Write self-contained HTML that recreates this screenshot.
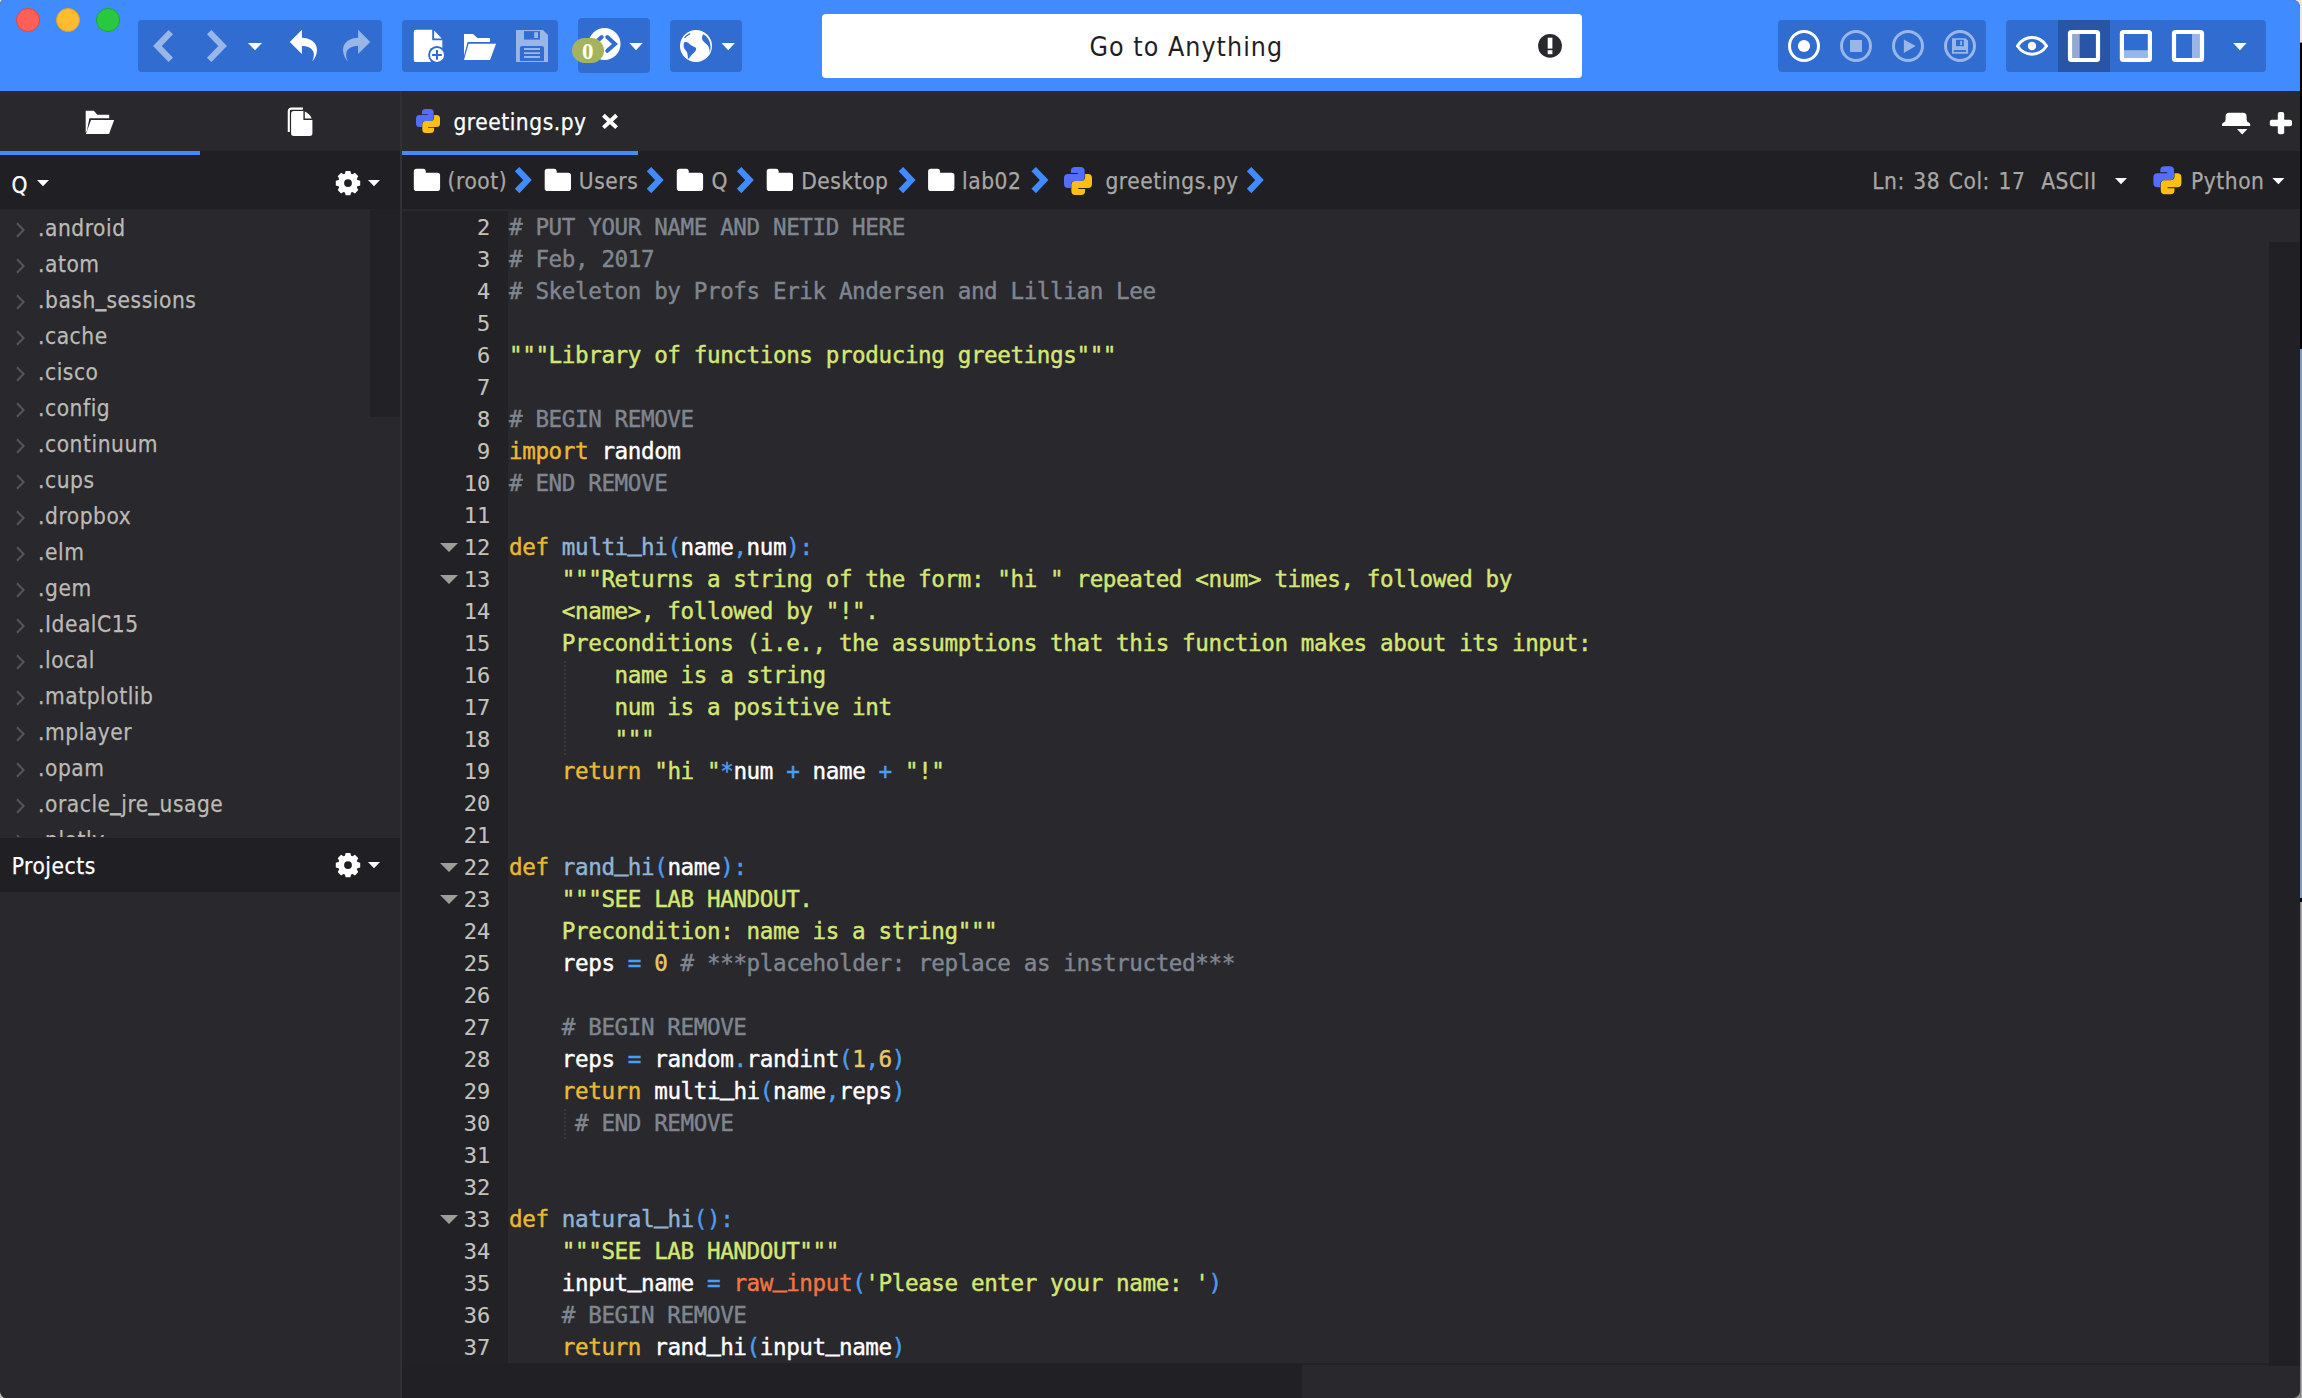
<!DOCTYPE html>
<html lang="en">
<head>
<meta charset="utf-8">
<title>greetings.py - Komodo</title>
<style>
*{box-sizing:border-box;margin:0;padding:0}
html,body{width:2302px;height:1398px;overflow:hidden;background:#000}
body{font-family:"DejaVu Sans Condensed","DejaVu Sans","Liberation Sans",sans-serif;font-stretch:condensed;position:relative}
.abs{position:absolute}
#deskTop{left:2290px;top:0;width:12px;height:42.5px;background:#e9e7e2;border-bottom:1.5px solid #8c8b88}
#cTL{left:0;top:0;width:5px;height:7px;background:#e6e4dd}
#cBL{left:0;top:1388px;width:8px;height:10px;background:#bebebe}
#win{left:0;top:0;width:2300px;height:1398px;background:#29282d;border-radius:3px 7px 7px 6px / 5px 7px 7px 8px;overflow:hidden}
#toolbar{left:0;top:0;width:2300px;height:91px;background:#3f8bff}
.grp{background:#316dd0;border-radius:4px}
.light{border-radius:50%;width:24px;height:24px;top:8px}
#search{left:822px;top:14px;width:760px;height:63.8px;background:#fff;border-radius:4px}
#search span{position:absolute;left:267.5px;top:15.5px;font-size:26.5px;line-height:34px;color:#1f1e23;white-space:pre;letter-spacing:1.05px}
.ui{font-size:22.5px;line-height:28px;white-space:pre;color:#a9a7a3;letter-spacing:.55px;-webkit-text-stroke:.25px}
.w{color:#fff}
#sidebar{left:0;top:91px;width:400px;height:1307px;background:#29282d}
#divider{left:400px;top:91px;width:2px;height:1307px;background:#313036}
.dark{background:#201f24}
.blue{background:#3f8bff}
.row{position:absolute;left:38px;height:36px;line-height:36px;font-size:22.5px;color:#bcbab5;white-space:pre;letter-spacing:.55px;padding-top:1px;-webkit-text-stroke:.25px}
.tw{position:absolute;left:16px}
#gutter{left:402px;top:211px;width:106px;height:1153px;background:#222126}
#code{left:509px;top:210.5px;font-family:"DejaVu Sans Mono","Liberation Mono",monospace;font-size:22.6px;letter-spacing:-.406px;line-height:32px;color:#fff;white-space:pre;-webkit-text-stroke:.42px}
#nums{left:402px;top:211.7px;width:88.2px;text-align:right;font-family:"DejaVu Sans Mono","Liberation Mono",monospace;font-size:22px;letter-spacing:-.045px;line-height:32px;color:#c4c2bd;white-space:pre;-webkit-text-stroke:.12px}
.c{color:#7f868f}.s{color:#d5e773}.k{color:#ecb834}.f{color:#8fb4d6}.o{color:#4c9cf0}.n{color:#e9c86a}.b{color:#f27542}
.u{position:relative;top:-4.3px;-webkit-text-stroke:1.3px}
.u2{position:relative;top:-2px;-webkit-text-stroke:.8px}
.fold{position:absolute;left:439.5px;width:0;height:0;border-left:9.4px solid transparent;border-right:9.4px solid transparent;border-top:9.4px solid #9b9d98}
.guide{position:absolute;left:564px;width:2px;background:repeating-linear-gradient(to bottom,#39383d 0,#39383d 2px,transparent 2px,transparent 4px)}
</style>
</head>
<body>
<div id="deskTop" class="abs"></div><div class="abs" style="left:2299px;top:349px;width:3px;height:549px;background:#7f9bc4"></div><div class="abs" style="left:2290px;top:902px;width:12px;height:496px;background:linear-gradient(to right,#8f8f8f 0,#8f8f8f 9.6px,#6a6a6a 10px,#909090 10.8px,#bababa 12px)"></div><div id="cTL" class="abs"></div><div id="cBL" class="abs"></div>
<div id="win" class="abs">
<!--TOOLBAR-->
<div id="toolbar" class="abs">
  <div class="abs light" style="left:16px;background:#ff5f57;border:1px solid #e2463f"></div>
  <div class="abs light" style="left:56px;background:#febc2e;border:1px solid #dfa123"></div>
  <div class="abs light" style="left:96px;background:#28c840;border:1px solid #1aab29"></div>
  <div class="abs grp" style="left:138px;top:20px;width:244px;height:52px"></div>
  <div class="abs grp" style="left:402px;top:20px;width:156px;height:52px"></div>
  <div class="abs grp" style="left:578px;top:18px;width:72px;height:55px"></div>
  <div class="abs grp" style="left:670px;top:20px;width:72px;height:52px"></div>
  <div id="search" class="abs"><span>Go to Anything</span><svg class="abs" style="left:714px;top:18px" width="28" height="28" viewBox="0 0 28 28"><circle cx="14" cy="13.9" r="11.9" fill="#29282d"/><rect x="11.7" y="5.7" width="4.7" height="10.9" fill="#fff"/><rect x="11.7" y="18.2" width="4.7" height="4" fill="#fff"/></svg></div>
  <div class="abs grp" style="left:1778px;top:20px;width:208px;height:52px"></div>
  <div class="abs grp" style="left:2006px;top:20px;width:260px;height:52px"></div>
  <div class="abs" style="left:2058px;top:20px;width:52px;height:52px;background:#2855a5"></div>
  <!--TBICONS--><svg class="abs" style="left:0;top:0" width="2300" height="91" viewBox="0 0 2300 91">
  <g fill="none" stroke="#98b6e7" stroke-width="6.2" stroke-linejoin="miter" stroke-miterlimit="10">
    <path d="M170.8 32.2 L157.4 46 L170.8 59.8"/>
    <path d="M209.2 32.2 L222.6 46 L209.2 59.8"/>
  </g>
  <g fill="#fff">
    <path d="M248 43h14l-7 7.2z"/>
    <path d="M629.3 43h13.4l-6.7 7.2z"/>
    <path d="M721.5 43h13.4l-6.7 7.2z"/>
    <path d="M2233.2 43h13.4l-6.7 7.2z"/>
  </g>
  <!-- undo / redo -->
  <path id="undoP" fill="#fff" d="M289.8 42.1 L301.9 29.8 V37.7 C309 37.7 317 41.5 317 50 C317 55 314.5 58.8 312.3 61.4 C313.8 57.5 314.2 54.5 313.6 52.5 C312.3 48.5 308.5 46 301.9 46 V53.9 Z"/>
  <path fill="#98b6e7" d="M 370.2 42.1 L 358.1 29.8 V 37.7 C 351.0 37.7 343.0 41.5 343.0 50 C 343.0 55 345.5 58.8 347.7 61.4 C 346.2 57.5 345.8 54.5 346.4 52.5 C 347.7 48.5 351.5 46 358.1 46 V 53.9 Z"/>
  <!-- new file -->
  <path fill="#fff" d="M416 29.8 H432.2 V40.2 H442.3 V60 a2.1 2.1 0 0 1 -2.1 2.1 H416 a2.2 2.2 0 0 1 -2.2 -2.2 V32 a2.2 2.2 0 0 1 2.2 -2.2 Z"/>
  <path fill="#fff" d="M434.1 30.6 L441.7 38.4 H434.1 Z"/>
  <circle cx="437" cy="54.9" r="8.9" fill="#316dd0"/>
  <circle cx="437" cy="54.9" r="7" fill="#fff"/>
  <path d="M432.1 54.9 H441.9 M437 50 V59.8" stroke="#316dd0" stroke-width="2" fill="none"/>
  <!-- folder open -->
  <path fill="#fff" d="M464 34 H473 L477.3 38 H490 V42 H467.6 L464 56 Z"/>
  <path fill="#fff" d="M468.6 43.8 H496 L490 60 H464 Z"/>
  <!-- save (disabled) -->
  <path fill="#98b6e7" d="M516 30 H543 L548 35 V62 H516 Z"/>
  <rect x="524" y="31.1" width="16" height="8.5" fill="#316dd0"/>
  <rect x="534.2" y="32.2" width="3.8" height="5.8" fill="#98b6e7"/>
  <path fill="#316dd0" d="M521.9 46 H542 a2 2 0 0 1 2 2 V61 H519.9 V48 a2 2 0 0 1 2 -2 Z"/>
  <path d="M524 49 H540 M524 53.1 H540 M524 57 H540" stroke="#98b6e7" stroke-width="1.8"/>
  <!-- code circle + badge -->
  <circle cx="604.5" cy="44" r="16" fill="#fff"/>
  <path d="M607.3 37 L615 43.9 L607.3 50.8 M601.7 37 L594 43.9 L601.7 50.8" fill="none" stroke="#316dd0" stroke-width="4" stroke-linecap="round" stroke-linejoin="miter"/>
  <rect x="572" y="38" width="32" height="25" rx="12.5" fill="#a5b35c"/>
  <text x="587.7" y="58.5" text-anchor="middle" font-family="'Liberation Serif','DejaVu Serif',serif" font-weight="bold" font-size="23" fill="#fff">0</text>
  <!-- globe -->
  <circle cx="696" cy="46" r="16" fill="#fff"/>
  <path fill="#316dd0" d="M684 42.5 C686.5 41.6 688 42.4 689.5 44 C691.5 46 694.5 46.4 696 48 C696.8 50 694.5 52.5 692.5 54 C690.8 55.6 689.8 58 688 59 C687.6 56 687.8 53.5 686.5 51.5 C685 49.5 683.4 48 683.6 45.5 Z"/>
  <path fill="#316dd0" d="M703.5 34.2 C707.5 36.5 710 40.5 710.5 45.5 C710.7 48 710.4 50.5 709.7 52.6 C709.8 49.5 709 46.5 707 44.5 C705 42.8 702.3 41 702 38.5 C701.9 36.6 702.5 35.2 703.5 34.2 Z"/>
  <path fill="none" stroke="#316dd0" stroke-width="1.2" d="M684.5 38 C686 36 688 34.5 690 33.6"/>
  <!-- record group -->
  <circle cx="1804" cy="46" r="14.5" fill="none" stroke="#fff" stroke-width="3"/>
  <circle cx="1804" cy="46" r="6.1" fill="#fff"/>
  <g stroke="#98b6e7" stroke-width="3" fill="none">
    <circle cx="1856" cy="46" r="14.5"/><circle cx="1908" cy="46" r="14.5"/><circle cx="1960" cy="46" r="14.5"/>
  </g>
  <rect x="1850" y="40" width="12" height="12" fill="#98b6e7"/>
  <path fill="#98b6e7" d="M1903.9 39.4 L1915.7 46 L1903.9 53 Z"/>
  <path fill="#98b6e7" d="M1952 38.2 H1965.6 L1968.1 40.7 V53.7 H1952 Z"/>
  <rect x="1956" y="39.8" width="7.8" height="6.4" fill="#316dd0"/>
  <rect x="1960.2" y="40.9" width="1.8" height="4.2" fill="#98b6e7"/>
  <rect x="1953.8" y="50.1" width="12.3" height="1.8" fill="#316dd0"/>
  <!-- eye -->
  <path d="M2017.4 46 C2021 40.5 2026 37.6 2032 37.6 C2038 37.6 2043 40.5 2046.6 46 C2043 51.2 2038 54.2 2032 54.2 C2026 54.2 2021 51.2 2017.4 46 Z" fill="none" stroke="#fff" stroke-width="3" stroke-linejoin="round"/>
  <circle cx="2032" cy="46" r="4.2" fill="#fff"/>
  <!-- panes -->
  <rect x="2072" y="34" width="7.7" height="24" fill="#93a9d2"/>
  <rect x="2123.9" y="50.2" width="24" height="7.8" fill="#98b6e7"/>
  <rect x="2192" y="34" width="8" height="24" fill="#98b6e7"/>
  <g fill="none" stroke="#fff" stroke-width="4.2">
    <rect x="2070" y="32" width="28" height="28" rx="1.5"/>
    <rect x="2121.9" y="32" width="28" height="28" rx="1.5"/>
    <rect x="2174" y="32" width="28" height="28" rx="1.5"/>
  </g>
</svg><!--/TBICONS-->
</div>
<!--SIDEBAR-->
<div id="sidebar" class="abs">
  <div class="abs dark" style="left:0;top:60px;width:400px;height:58px"></div>
  <div class="abs blue" style="left:0;top:60px;width:200px;height:4px"></div>
  <div class="abs ui w" style="left:11.5px;top:79.7px">Q</div>
  <!--SBICONS--><svg class="abs" style="left:0;top:0;z-index:3" width="400" height="1307" viewBox="0 91 400 1307"><g transform="translate(85.7 110.8) scale(1.0000)" fill="#fff"><path d="M0 0H8.2L11.55 3.85H23.5V7.55H3.7L1.2 20.1L0 21.6Z"/><path d="M5.4 9.2H28.45L23.3 23.2H0.1Z"/></g><path fill="none" stroke="#fff" stroke-width="2.1" d="M288.8 132V111.2a2.6 2.6 0 0 1 2.6-2.6H303"/><path fill="#fff" d="M293.7 110.9H303.4V120H312.4V133.3a2.6 2.6 0 0 1-2.6 2.6H293.7a2.6 2.6 0 0 1-2.6-2.6V113.5a2.6 2.6 0 0 1 2.6-2.6Z"/><path fill="#fff" d="M304.8 111.6Q309.5 113.6 311.7 118.4H304.8Z"/><path fill="#fff" d="M37 180h12l-6.0 6.3z"/><path fill="#fff" fill-rule="evenodd" d="M344.90 173.70 L345.65 170.90 L350.35 170.90 L351.10 173.70 L352.45 174.26 L354.97 172.81 L358.29 176.13 L356.84 178.65 L357.40 180.00 L360.20 180.75 L360.20 185.45 L357.40 186.20 L356.84 187.55 L358.29 190.07 L354.97 193.39 L352.45 191.94 L351.10 192.50 L350.35 195.30 L345.65 195.30 L344.90 192.50 L343.55 191.94 L341.03 193.39 L337.71 190.07 L339.16 187.55 L338.60 186.20 L335.80 185.45 L335.80 180.75 L338.60 180.00 L339.16 178.65 L337.71 176.13 L341.03 172.81 L343.55 174.26 Z M344.10 183.10 a3.9 3.9 0 1 0 7.8 0 a3.9 3.9 0 1 0 -7.8 0 Z"/><path fill="#fff" d="M368 180h12l-6.0 6.3z"/><path fill="#fff" fill-rule="evenodd" d="M344.90 855.70 L345.65 852.90 L350.35 852.90 L351.10 855.70 L352.45 856.26 L354.97 854.81 L358.29 858.13 L356.84 860.65 L357.40 862.00 L360.20 862.75 L360.20 867.45 L357.40 868.20 L356.84 869.55 L358.29 872.07 L354.97 875.39 L352.45 873.94 L351.10 874.50 L350.35 877.30 L345.65 877.30 L344.90 874.50 L343.55 873.94 L341.03 875.39 L337.71 872.07 L339.16 869.55 L338.60 868.20 L335.80 867.45 L335.80 862.75 L338.60 862.00 L339.16 860.65 L337.71 858.13 L341.03 854.81 L343.55 856.26 Z M344.10 865.10 a3.9 3.9 0 1 0 7.8 0 a3.9 3.9 0 1 0 -7.8 0 Z"/><path fill="#fff" d="M368 862h12l-6.0 6.3z"/></svg><!--/SBICONS-->
  <div class="abs" style="left:370px;top:118px;width:30px;height:208px;background:#222126"></div>
  <div class="abs" style="left:0;top:118px;width:400px;height:627.6px;overflow:hidden" id="tree">
<!--TREE-->
<svg class="tw" style="top:13px" width="10" height="16" viewBox="0 0 10 16"><path d="M1 1.2L7.6 8L1 14.8" fill="none" stroke="#565559" stroke-width="2"/></svg><div class="row" style="top:0px">.android</div>
<svg class="tw" style="top:49px" width="10" height="16" viewBox="0 0 10 16"><path d="M1 1.2L7.6 8L1 14.8" fill="none" stroke="#565559" stroke-width="2"/></svg><div class="row" style="top:36px">.atom</div>
<svg class="tw" style="top:85px" width="10" height="16" viewBox="0 0 10 16"><path d="M1 1.2L7.6 8L1 14.8" fill="none" stroke="#565559" stroke-width="2"/></svg><div class="row" style="top:72px">.bash<span class="u2">_</span>sessions</div>
<svg class="tw" style="top:121px" width="10" height="16" viewBox="0 0 10 16"><path d="M1 1.2L7.6 8L1 14.8" fill="none" stroke="#565559" stroke-width="2"/></svg><div class="row" style="top:108px">.cache</div>
<svg class="tw" style="top:157px" width="10" height="16" viewBox="0 0 10 16"><path d="M1 1.2L7.6 8L1 14.8" fill="none" stroke="#565559" stroke-width="2"/></svg><div class="row" style="top:144px">.cisco</div>
<svg class="tw" style="top:193px" width="10" height="16" viewBox="0 0 10 16"><path d="M1 1.2L7.6 8L1 14.8" fill="none" stroke="#565559" stroke-width="2"/></svg><div class="row" style="top:180px">.config</div>
<svg class="tw" style="top:229px" width="10" height="16" viewBox="0 0 10 16"><path d="M1 1.2L7.6 8L1 14.8" fill="none" stroke="#565559" stroke-width="2"/></svg><div class="row" style="top:216px">.continuum</div>
<svg class="tw" style="top:265px" width="10" height="16" viewBox="0 0 10 16"><path d="M1 1.2L7.6 8L1 14.8" fill="none" stroke="#565559" stroke-width="2"/></svg><div class="row" style="top:252px">.cups</div>
<svg class="tw" style="top:301px" width="10" height="16" viewBox="0 0 10 16"><path d="M1 1.2L7.6 8L1 14.8" fill="none" stroke="#565559" stroke-width="2"/></svg><div class="row" style="top:288px">.dropbox</div>
<svg class="tw" style="top:337px" width="10" height="16" viewBox="0 0 10 16"><path d="M1 1.2L7.6 8L1 14.8" fill="none" stroke="#565559" stroke-width="2"/></svg><div class="row" style="top:324px">.elm</div>
<svg class="tw" style="top:373px" width="10" height="16" viewBox="0 0 10 16"><path d="M1 1.2L7.6 8L1 14.8" fill="none" stroke="#565559" stroke-width="2"/></svg><div class="row" style="top:360px">.gem</div>
<svg class="tw" style="top:409px" width="10" height="16" viewBox="0 0 10 16"><path d="M1 1.2L7.6 8L1 14.8" fill="none" stroke="#565559" stroke-width="2"/></svg><div class="row" style="top:396px">.IdealC15</div>
<svg class="tw" style="top:445px" width="10" height="16" viewBox="0 0 10 16"><path d="M1 1.2L7.6 8L1 14.8" fill="none" stroke="#565559" stroke-width="2"/></svg><div class="row" style="top:432px">.local</div>
<svg class="tw" style="top:481px" width="10" height="16" viewBox="0 0 10 16"><path d="M1 1.2L7.6 8L1 14.8" fill="none" stroke="#565559" stroke-width="2"/></svg><div class="row" style="top:468px">.matplotlib</div>
<svg class="tw" style="top:517px" width="10" height="16" viewBox="0 0 10 16"><path d="M1 1.2L7.6 8L1 14.8" fill="none" stroke="#565559" stroke-width="2"/></svg><div class="row" style="top:504px">.mplayer</div>
<svg class="tw" style="top:553px" width="10" height="16" viewBox="0 0 10 16"><path d="M1 1.2L7.6 8L1 14.8" fill="none" stroke="#565559" stroke-width="2"/></svg><div class="row" style="top:540px">.opam</div>
<svg class="tw" style="top:589px" width="10" height="16" viewBox="0 0 10 16"><path d="M1 1.2L7.6 8L1 14.8" fill="none" stroke="#565559" stroke-width="2"/></svg><div class="row" style="top:576px">.oracle<span class="u2">_</span>jre<span class="u2">_</span>usage</div>
<svg class="tw" style="top:625px" width="10" height="16" viewBox="0 0 10 16"><path d="M1 1.2L7.6 8L1 14.8" fill="none" stroke="#565559" stroke-width="2"/></svg><div class="row" style="top:612px">.plotly</div>
  </div>
  <div class="abs dark" style="left:0;top:747px;width:400px;height:54px"></div>
  <div class="abs ui w" style="left:11.7px;top:761px">Projects</div>
</div>
<div id="divider" class="abs"></div>
<!--EDITOR-->
<div class="abs dark" style="left:402px;top:151px;width:1898px;height:58px"></div>
<div class="abs blue" style="left:402px;top:151px;width:236px;height:4px"></div>
<div class="abs ui w" style="left:453.4px;top:108.4px">greetings.py</div>
<!--CRUMBS--><svg class="abs" style="left:402px;top:91px" width="1898" height="120" viewBox="402 91 1898 120"><g transform="translate(416 109) scale(1.0000)"><path fill="#536dfe" d="M5.9 3.5a3.5 3.5 0 0 1 3.5-3.5h4.8a3.5 3.5 0 0 1 3.5 3.5v5a3.5 3.5 0 0 1-3.5 3.5h-4.8a3.5 3.5 0 0 0-3.5 3.5v2.5h-2.4a3.5 3.5 0 0 1-3.5-3.5v-5a3.5 3.5 0 0 1 3.5-3.5h8.3v-.8h-5.9z"/><path fill="#fdbf14" transform="rotate(180 12 12)" d="M5.9 3.5a3.5 3.5 0 0 1 3.5-3.5h4.8a3.5 3.5 0 0 1 3.5 3.5v5a3.5 3.5 0 0 1-3.5 3.5h-4.8a3.5 3.5 0 0 0-3.5 3.5v2.5h-2.4a3.5 3.5 0 0 1-3.5-3.5v-5a3.5 3.5 0 0 1 3.5-3.5h8.3v-.8h-5.9z"/></g><path d="M603.4 115.2L616.6 127.6M616.6 115.2L603.4 127.6" stroke="#fff" stroke-width="4" fill="none"/><path fill="#fff" d="M2222 126V124.6Q2222 123 2223.6 122.6Q2225.6 121.8 2225.6 119.4V116.4Q2225.6 112.8 2229.2 112.8H2243Q2246.6 112.8 2246.6 116.4V119.4Q2246.6 121.8 2248.6 122.6Q2250.2 123 2250.2 124.6V126Z"/><path fill="#fff" d="M2237 129h10.4l-5.2 5.4z"/><rect x="2269.8" y="119.8" width="22.2" height="6.5" rx="2" fill="#fff"/><rect x="2277.8" y="112" width="6.4" height="22.2" rx="2" fill="#fff"/><path fill="#fff" transform="translate(413.8 168.8)" d="M2.8 0H9.4Q11.6 0 12 2.2V4H23.5A2.8 2.8 0 0 1 26.3 6.8V19.5A2.8 2.8 0 0 1 23.5 22.3H2.8A2.8 2.8 0 0 1 0 19.5V2.8A2.8 2.8 0 0 1 2.8 0Z"/><path fill="#fff" transform="translate(544.7 168.8)" d="M2.8 0H9.4Q11.6 0 12 2.2V4H23.5A2.8 2.8 0 0 1 26.3 6.8V19.5A2.8 2.8 0 0 1 23.5 22.3H2.8A2.8 2.8 0 0 1 0 19.5V2.8A2.8 2.8 0 0 1 2.8 0Z"/><path fill="#fff" transform="translate(676.8 168.8)" d="M2.8 0H9.4Q11.6 0 12 2.2V4H23.5A2.8 2.8 0 0 1 26.3 6.8V19.5A2.8 2.8 0 0 1 23.5 22.3H2.8A2.8 2.8 0 0 1 0 19.5V2.8A2.8 2.8 0 0 1 2.8 0Z"/><path fill="#fff" transform="translate(766.7 168.8)" d="M2.8 0H9.4Q11.6 0 12 2.2V4H23.5A2.8 2.8 0 0 1 26.3 6.8V19.5A2.8 2.8 0 0 1 23.5 22.3H2.8A2.8 2.8 0 0 1 0 19.5V2.8A2.8 2.8 0 0 1 2.8 0Z"/><path fill="#fff" transform="translate(928.1 168.8)" d="M2.8 0H9.4Q11.6 0 12 2.2V4H23.5A2.8 2.8 0 0 1 26.3 6.8V19.5A2.8 2.8 0 0 1 23.5 22.3H2.8A2.8 2.8 0 0 1 0 19.5V2.8A2.8 2.8 0 0 1 2.8 0Z"/><path fill="none" stroke="#3f8bff" stroke-width="6.2" stroke-miterlimit="10" d="M517.09 169.19L527.52 180.10L517.09 191.01"/><path fill="none" stroke="#3f8bff" stroke-width="6.2" stroke-miterlimit="10" d="M648.99 169.19L659.42 180.10L648.99 191.01"/><path fill="none" stroke="#3f8bff" stroke-width="6.2" stroke-miterlimit="10" d="M739.09 169.19L749.52 180.10L739.09 191.01"/><path fill="none" stroke="#3f8bff" stroke-width="6.2" stroke-miterlimit="10" d="M900.89 169.19L911.32 180.10L900.89 191.01"/><path fill="none" stroke="#3f8bff" stroke-width="6.2" stroke-miterlimit="10" d="M1033.69 169.19L1044.12 180.10L1033.69 191.01"/><path fill="none" stroke="#3f8bff" stroke-width="6.2" stroke-miterlimit="10" d="M1249.09 169.19L1259.52 180.10L1249.09 191.01"/><g transform="translate(1064 167) scale(1.1667)"><path fill="#536dfe" d="M5.9 3.5a3.5 3.5 0 0 1 3.5-3.5h4.8a3.5 3.5 0 0 1 3.5 3.5v5a3.5 3.5 0 0 1-3.5 3.5h-4.8a3.5 3.5 0 0 0-3.5 3.5v2.5h-2.4a3.5 3.5 0 0 1-3.5-3.5v-5a3.5 3.5 0 0 1 3.5-3.5h8.3v-.8h-5.9z"/><path fill="#fdbf14" transform="rotate(180 12 12)" d="M5.9 3.5a3.5 3.5 0 0 1 3.5-3.5h4.8a3.5 3.5 0 0 1 3.5 3.5v5a3.5 3.5 0 0 1-3.5 3.5h-4.8a3.5 3.5 0 0 0-3.5 3.5v2.5h-2.4a3.5 3.5 0 0 1-3.5-3.5v-5a3.5 3.5 0 0 1 3.5-3.5h8.3v-.8h-5.9z"/></g><g transform="translate(2153.4 166.3) scale(1.1667)"><path fill="#536dfe" d="M5.9 3.5a3.5 3.5 0 0 1 3.5-3.5h4.8a3.5 3.5 0 0 1 3.5 3.5v5a3.5 3.5 0 0 1-3.5 3.5h-4.8a3.5 3.5 0 0 0-3.5 3.5v2.5h-2.4a3.5 3.5 0 0 1-3.5-3.5v-5a3.5 3.5 0 0 1 3.5-3.5h8.3v-.8h-5.9z"/><path fill="#fdbf14" transform="rotate(180 12 12)" d="M5.9 3.5a3.5 3.5 0 0 1 3.5-3.5h4.8a3.5 3.5 0 0 1 3.5 3.5v5a3.5 3.5 0 0 1-3.5 3.5h-4.8a3.5 3.5 0 0 0-3.5 3.5v2.5h-2.4a3.5 3.5 0 0 1-3.5-3.5v-5a3.5 3.5 0 0 1 3.5-3.5h8.3v-.8h-5.9z"/></g><path fill="#fff" d="M2115 178h12l-6.0 6.3z"/><path fill="#fff" d="M2272.4 178h12l-6.0 6.3z"/></svg><div class="abs ui" style="left:447.6px;top:167px">(root)</div><div class="abs ui" style="left:578.8px;top:167px">Users</div><div class="abs ui" style="left:711.4px;top:167px">Q</div><div class="abs ui" style="left:801.2px;top:167px">Desktop</div><div class="abs ui" style="left:962px;top:167px">lab02</div><div class="abs ui" style="left:1105.4px;top:167px">greetings.py</div><div class="abs ui" style="left:1872.2px;top:167px"><span style="word-spacing:1.6px">Ln: 38 Col: 17</span></div><div class="abs ui" style="left:2041.2px;top:167px">ASCII</div><div class="abs ui" style="left:2191px;top:167px">Python</div><!--/CRUMBS-->
<div id="gutter" class="abs"></div>
<div id="nums" class="abs"><!--NUMS-->2
3
4
5
6
7
8
9
10
11
12
13
14
15
16
17
18
19
20
21
22
23
24
25
26
27
28
29
30
31
32
33
34
35
36
37</div>
<div id="code" class="abs"><!--CODE--><span class="c"># PUT YOUR NAME AND NETID HERE</span>
<span class="c"># Feb, 2017</span>
<span class="c"># Skeleton by Profs Erik Andersen and Lillian Lee</span>

<span class="s">"""Library of functions producing greetings"""</span>

<span class="c"># BEGIN REMOVE</span>
<span class="k">import</span> random
<span class="c"># END REMOVE</span>

<span class="k">def</span> <span class="f">multi<span class="u">_</span>hi</span><span class="o">(</span>name<span class="o">,</span>num<span class="o">):</span>
    <span class="s">"""Returns a string of the form: "hi " repeated &lt;num&gt; times, followed by</span>
    <span class="s">&lt;name&gt;, followed by "!".</span>
    <span class="s">Preconditions (i.e., the assumptions that this function makes about its input:</span>
    <span class="s">    name is a string</span>
    <span class="s">    num is a positive int</span>
    <span class="s">    """</span>
    <span class="k">return</span> <span class="s">"hi "</span><span class="o">*</span>num <span class="o">+</span> name <span class="o">+</span> <span class="s">"!"</span>


<span class="k">def</span> <span class="f">rand<span class="u">_</span>hi</span><span class="o">(</span>name<span class="o">):</span>
    <span class="s">"""SEE LAB HANDOUT.</span>
    <span class="s">Precondition: name is a string"""</span>
    reps <span class="o">=</span> <span class="n">0</span> <span class="c"># ***placeholder: replace as instructed***</span>

    <span class="c"># BEGIN REMOVE</span>
    reps <span class="o">=</span> random<span class="o">.</span>randint<span class="o">(</span><span class="n">1</span><span class="o">,</span><span class="n">6</span><span class="o">)</span>
    <span class="k">return</span> multi<span class="u">_</span>hi<span class="o">(</span>name<span class="o">,</span>reps<span class="o">)</span>
     <span class="c"># END REMOVE</span>


<span class="k">def</span> <span class="f">natural<span class="u">_</span>hi</span><span class="o">():</span>
    <span class="s">"""SEE LAB HANDOUT"""</span>
    input<span class="u">_</span>name <span class="o">=</span> <span class="b">raw<span class="u">_</span>input</span><span class="o">(</span><span class="s">'Please enter your name: '</span><span class="o">)</span>
    <span class="c"># BEGIN REMOVE</span>
    <span class="k">return</span> rand<span class="u">_</span>hi<span class="o">(</span>input<span class="u">_</span>name<span class="o">)</span></div>
<!--FOLDS--><div class="fold" style="top:542.9px"></div><div class="fold" style="top:574.9px"></div><div class="fold" style="top:862.9px"></div><div class="fold" style="top:894.9px"></div><div class="fold" style="top:1214.9px"></div><div class="guide" style="top:661px;height:94px"></div><div class="guide" style="top:1109px;height:30px"></div>
<div class="abs" style="left:2268.5px;top:242.4px;width:32px;height:1123.6px;background:#212025"></div>
<div class="abs" style="left:402px;top:1363px;width:900px;height:35px;background:#212025"></div>
<div class="abs" style="left:1302px;top:1363px;width:966.5px;height:2.4px;background:#232227"></div>
</div>
</body>
</html>
